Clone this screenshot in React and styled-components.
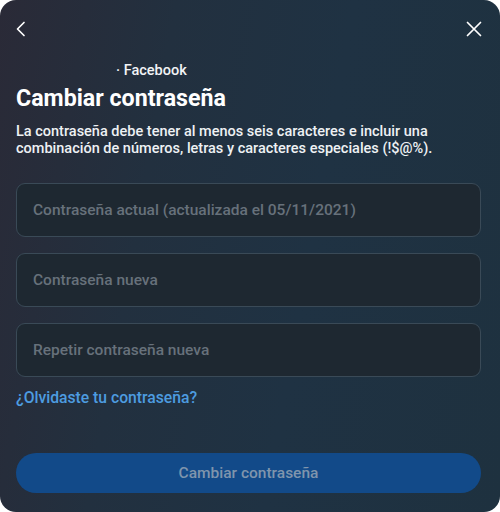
import React from "react";
import styled, { createGlobalStyle } from "styled-components";

const GlobalStyle = createGlobalStyle`
  html, body {
    margin: 0;
    padding: 0;
    background: #ffffff;
  }
  body {
    font-family: "Roboto", "Inter", "Liberation Sans", sans-serif;
  }
`;

const Modal = styled.div`
  box-sizing: border-box;
  width: 500px;
  height: 512px;
  border-radius: 16px;
  background: linear-gradient(100deg, #2a2a37 0%, #22303f 30%, #1f3243 60%, #1e313f 100%);
  color: #ffffff;
  display: flex;
  flex-direction: column;
  padding: 0 19px 19px 16px;
`;

const TopBar = styled.div`
  display: flex;
  justify-content: space-between;
  align-items: center;
  height: 58px;
  margin: 0 -2px 0 -4px;
`;

const IconButton = styled.button`
  background: none;
  border: none;
  padding: 0;
  width: 18px;
  height: 18px;
  display: flex;
  align-items: center;
  justify-content: center;
  color: #ffffff;
  cursor: pointer;
`;

const Account = styled.div`
  margin: 4px 0 0 100px;
  font-size: 14.5px;
  line-height: 18px;
  font-weight: 500;
  color: #f2f4f6;
`;

const Title = styled.h1`
  margin: 4px 0 0;
  font-size: 23.2px;
  line-height: 28px;
  font-weight: 700;
`;

const Hint = styled.p`
  margin: 11px 0 0;
  font-size: 14.5px;
  line-height: 17px;
  font-weight: 500;
  color: #eef1f4;
`;

const Fields = styled.div`
  display: flex;
  flex-direction: column;
  gap: 16px;
  margin-top: 26px;
`;

const Field = styled.input`
  box-sizing: border-box;
  width: 100%;
  height: 54px;
  border-radius: 9px;
  border: 1px solid #3a4a57;
  background: #1e2831;
  padding: 0 16px;
  font-family: inherit;
  font-size: 15.5px;
  font-weight: 500;
  color: #e6e9ec;
  outline: none;

  &::placeholder {
    color: #67717b;
  }
`;

const ForgotLink = styled.a`
  margin-top: 11px;
  align-self: flex-start;
  font-size: 15.7px;
  line-height: 19px;
  font-weight: 500;
  color: #4d9ce0;
  text-decoration: none;
`;

const Spacer = styled.div`
  flex: 1;
`;

const SubmitButton = styled.button`
  height: 40px;
  border: none;
  border-radius: 20px;
  background: #124a89;
  color: #7f95ad;
  font-family: inherit;
  font-size: 15.5px;
  font-weight: 500;
`;

const BackIcon = () => (
  <svg width="14" height="16" viewBox="0 0 14 16" fill="none">
    <path d="M10 1.5 L3.5 8 L10 14.5" stroke="currentColor" strokeWidth="1.7" strokeLinecap="round" strokeLinejoin="round" />
  </svg>
);

const CloseIcon = () => (
  <svg width="16" height="16" viewBox="0 0 16 16" fill="none">
    <path d="M1.5 1.5 L14.5 14.5 M14.5 1.5 L1.5 14.5" stroke="currentColor" strokeWidth="1.7" strokeLinecap="round" />
  </svg>
);

export default function App() {
  return (
    <>
      <GlobalStyle />
      <Modal>
        <TopBar>
          <IconButton aria-label="Atrás">
            <BackIcon />
          </IconButton>
          <IconButton aria-label="Cerrar">
            <CloseIcon />
          </IconButton>
        </TopBar>
        <Account>· Facebook</Account>
        <Title>Cambiar contraseña</Title>
        <Hint>
          La contraseña debe tener al menos seis caracteres e incluir una
          combinación de números, letras y caracteres especiales (!$@%).
        </Hint>
        <Fields>
          <Field type="password" placeholder="Contraseña actual (actualizada el 05/11/2021)" />
          <Field type="password" placeholder="Contraseña nueva" />
          <Field type="password" placeholder="Repetir contraseña nueva" />
        </Fields>
        <ForgotLink href="#">¿Olvidaste tu contraseña?</ForgotLink>
        <Spacer />
        <SubmitButton disabled>Cambiar contraseña</SubmitButton>
      </Modal>
    </>
  );
}
